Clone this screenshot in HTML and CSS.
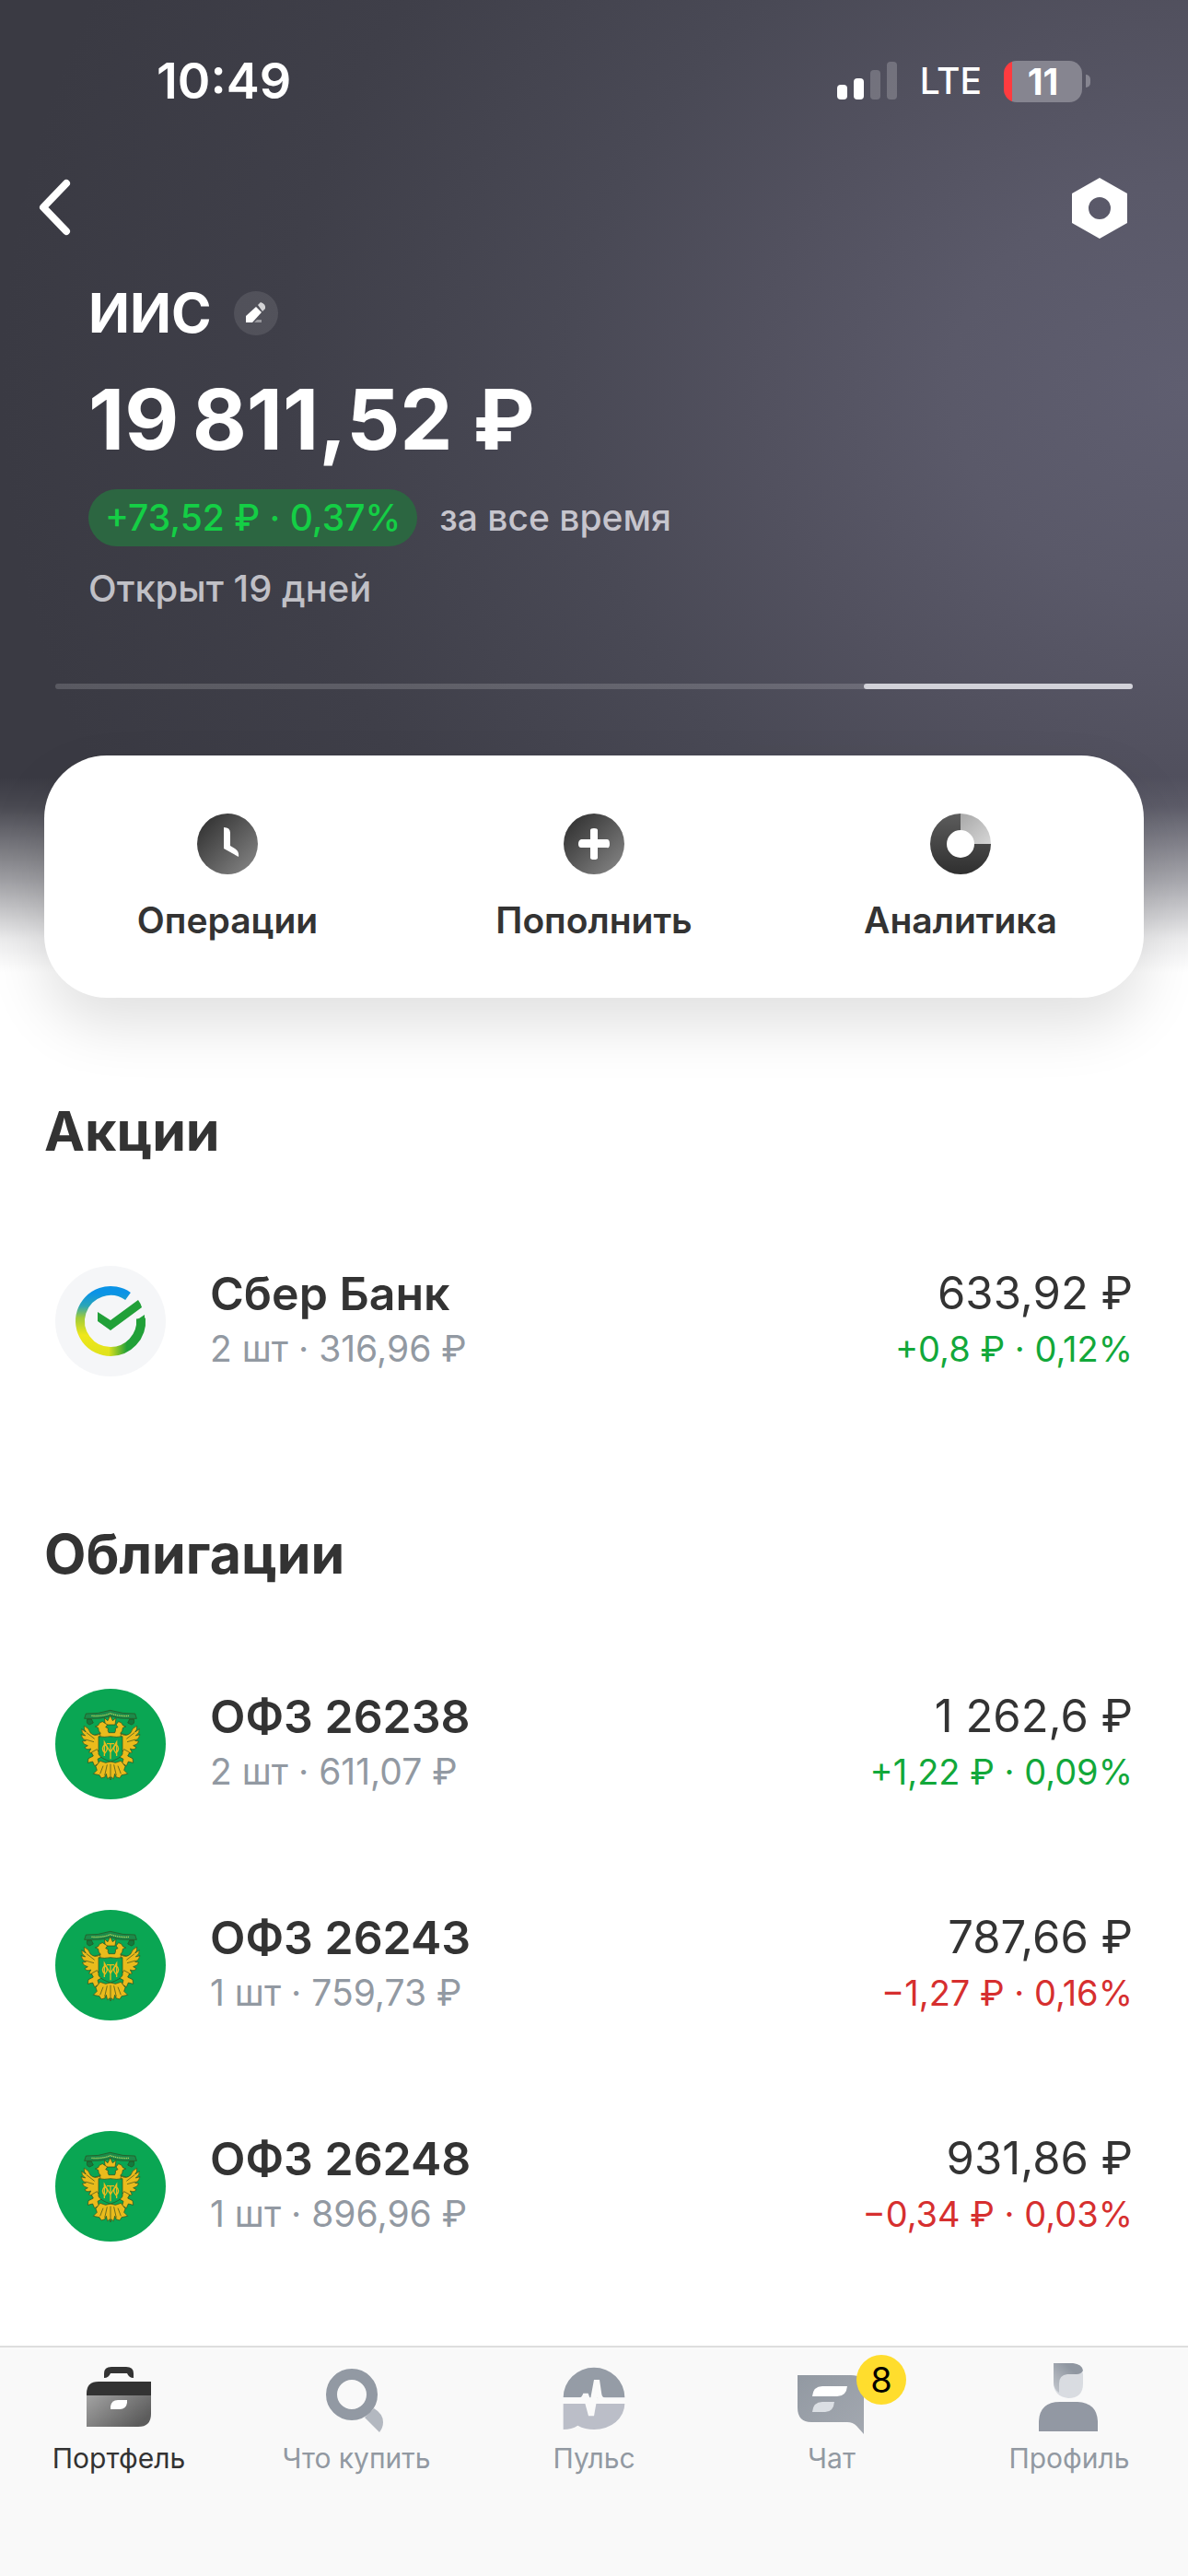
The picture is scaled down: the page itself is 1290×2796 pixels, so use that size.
FILE: index.html
```html
<!DOCTYPE html>
<html lang="ru">
<head>
<meta charset="utf-8">
<meta name="viewport" content="width=device-width, initial-scale=1">
<title>ИИС</title>
<link rel="stylesheet" href="styles.css">
</head>
<body>
<svg class="defs" width="0" height="0" aria-hidden="true">
  <defs>
    <linearGradient id="dark" x1="0" y1="0" x2="1" y2="1"><stop offset="0.1" stop-color="#333"/><stop offset="1" stop-color="#8a8a8a"/></linearGradient>
    <linearGradient id="ring" x1="0" y1="0" x2="0" y2="1"><stop offset="0" stop-color="#5c5c5c"/><stop offset="1" stop-color="#2f2f2f"/></linearGradient>
    <linearGradient id="wedge" x1="0" y1="0" x2="1" y2="1"><stop offset="0" stop-color="#a8a8a8"/><stop offset="1" stop-color="#d6d6d6"/></linearGradient>
    <linearGradient id="case" x1="0" y1="0" x2="1" y2="0.6"><stop offset="0" stop-color="#a3a3a3"/><stop offset="1" stop-color="#5c5c5c"/></linearGradient>
    <linearGradient id="chat" x1="0" y1="0" x2="1" y2="1"><stop offset="0" stop-color="#9299a2"/><stop offset="1" stop-color="#a3a8b0"/></linearGradient>
    <linearGradient id="hair" x1="1" y1="0" x2="0" y2="1"><stop offset="0.3" stop-color="#9097a1"/><stop offset="1" stop-color="#c4c8ce"/></linearGradient>
    <linearGradient id="sberLeft" gradientUnits="userSpaceOnUse" x1="60" y1="22" x2="60" y2="98"><stop offset="0.1" stop-color="#0b93e6"/><stop offset="0.28" stop-color="#2aa5b8"/><stop offset="0.45" stop-color="#9fcb3a"/><stop offset="0.7" stop-color="#efe71b"/><stop offset="1" stop-color="#dfe21c"/></linearGradient>
    <linearGradient id="sberRight" gradientUnits="userSpaceOnUse" x1="58" y1="0" x2="80" y2="0"><stop offset="0" stop-color="#dfe21c"/><stop offset="0.9" stop-color="#21a038"/></linearGradient>
  </defs>
  <symbol id="emblem" viewBox="60 69 360 360">
    <circle cx="240" cy="249" r="180" fill="#0aa653"/>
    <g stroke="#2c4a1c" stroke-width="2" stroke-linejoin="round">
      <path d="M160 150Q200 152 239 139Q282 152 320 150L325 166H308Q270 168 240 158Q208 168 172 166H155Z" fill="#1c8b4a"/>
      <path d="M164 168q-4 16 8 18l12-6-6-12zM316 168q4 16-8 18l-12-6 6-12z" fill="#137a3d"/>
      <g fill="#eabb1c">
        <path d="M223 186l-3-22 11 9 8-17 8 17 11-9-3 22z"/>
        <path d="M214 176q-12 2-14 12l-10 4 10 4q0 12 8 18l-14 4q-8 4-12 2v10h116v-10q-4 2-12-2l-14-4q8-6 8-18l10-4-10-4q-2-10-14-12l-8 10 6 8-8 4q2 8-2 14h-20q-4-6-2-14l-8-4 6-8z"/>
        <path d="M206 216q-18 10-32-4-4-16-20-22-2 12 6 20l-14-10q-2 12 12 22l-14-4q2 14 16 20l-12 2q4 12 18 14l-10 6q6 10 20 4l-6 12q8 6 18-2l-4 16q14-2 20-16l6-14z"/>
        <path d="M274 216q18 10 32-4 4-16 20-22 2 12-6 20l14-10q2 12-12 22l14-4q-2 14-16 20l12 2q-4 12-18 14l10 6q-6 10-20 4l6 12q-8 6-18-2l4 16q-14-2-20-16l-6-14z"/>
        <path d="M196 266l-18 10 6 12-16 8-2 14 16-4 6 14 14-8-4-14 14-8zM284 266l18 10-6 12 16 8 2 14-16-4-6 14-14-8 4-14-14-8z"/>
        <path d="M206 304l-14 18 4 12-12 12 20 4 6 10 12-4 4-10 4 16 8-6 2 10 2-10 8 6 4-16 4 10 12 4 6-10 20-4-12-12 4-12-14-18-18 6-16-4-16 4z"/>
      </g>
    </g>
    <path d="M216 320l-10 26M229 316l-8 36M240 314v42M251 316l8 36M264 320l10 26M162 212l26 20M158 234l28 8M318 212l-26 20M322 234l-28 8" fill="none" stroke="#2c4a1c" stroke-width="2"/>
    <path d="M201 224Q220 228 240 224Q260 228 279 224V282Q272 296 240 306Q208 296 201 282Z" fill="#0aa653" stroke="#2c4a1c" stroke-width="2"/>
    <path d="M220 288V242L240 276L260 242V288M240 246V298M228 248h24M222 250q-16 14 0 28q14-14 0-28M258 250q16 14 0 28q-14-14 0-28" fill="none" stroke="#eabb1c" stroke-width="4"/>
    <path d="M178 157Q210 160 240 149Q270 160 302 157" fill="none" stroke="#a9cf5a" stroke-width="4" stroke-dasharray="4 2"/>
  </symbol>
</svg>

<div class="app">
  <header class="hero">
    <div class="status">
      <span class="status-time">10:49</span>
      <div class="status-side">
        <svg class="signal" viewBox="0 0 66 42" aria-hidden="true"><g fill="#fff"><rect y="25" width="11" height="16" rx="4"/><rect x="18" y="18" width="11" height="23" rx="4"/><g opacity=".2"><rect x="36" y="9" width="11" height="32" rx="4"/><rect x="54" width="11" height="41" rx="4"/></g></g></svg>
        <span class="status-net">LTE</span>
        <span class="battery"><span class="battery-body">11</span><span class="battery-tip"></span></span>
      </div>
    </div>
    <div class="toolbar">
      <button class="icon-button" type="button" aria-label="Назад"><svg class="back" viewBox="0 0 40 66" aria-hidden="true"><path d="M32 6L7 32L32 58" fill="none" stroke="#fff" stroke-width="8" stroke-linecap="round" stroke-linejoin="round"/></svg></button>
      <button class="icon-button" type="button" aria-label="Настройки"><svg class="settings" viewBox="0 0 60 66" aria-hidden="true"><path fill="#fff" fill-rule="evenodd" d="M30 0L60 17V49L30 66L0 49V17ZM30 21a12 12 0 1 0 0 24a12 12 0 1 0 0-24Z"/></svg></button>
    </div>
    <div class="summary">
      <div class="account">
        <h1 class="account-name">ИИС</h1>
        <button class="edit" type="button" aria-label="Переименовать"><svg viewBox="0 0 48 48" aria-hidden="true"><path d="M13 34V27L24 17L30 23L20 34Z" fill="#fff"/><path d="M26 15l3-3q6 2 5 7l-3 3z" fill="#fff" opacity=".75"/><path d="M22 34l3-3h5v3z" fill="#fff" opacity=".4"/></svg></button>
      </div>
      <p class="total">19&#8239;811,52&nbsp;₽</p>
      <p class="profit"><span class="pill">+73,52 ₽ · 0,37%</span><span>за все время</span></p>
      <p class="opened">Открыт 19 дней</p>
    </div>
    <div class="progress"><span class="progress-value"></span></div>
    <div class="actions">
      <button class="action" type="button">
        <svg class="action-icon" viewBox="0 0 66 66" aria-hidden="true"><circle cx="33" cy="33" r="33" fill="url(#dark)"/><path d="M29 15q7 0 7 6V35L41 38Q46 41 45 47L29 38Z" fill="#fff"/></svg>
        Операции
      </button>
      <button class="action" type="button">
        <svg class="action-icon" viewBox="0 0 66 66" aria-hidden="true"><circle cx="33" cy="33" r="33" fill="url(#dark)"/><path d="M29 18q0-2 4-2t4 2V28H47q3 0 3 5t-3 4H37V48q0 2-4 2t-4-2V37H19q-3 0-3-4t3-5H29Z" fill="#fff"/></svg>
        Пополнить
      </button>
      <button class="action" type="button">
        <svg class="action-icon" viewBox="0 0 66 66" aria-hidden="true"><path d="M33 0A33 33 0 1 0 66 33H48A15 15 0 1 1 33 18Z" fill="url(#ring)"/><path d="M33 0A33 33 0 0 1 66 33H48A15 15 0 0 0 33 18Z" fill="url(#wedge)"/></svg>
        Аналитика
      </button>
    </div>
  </header>

  <main class="content">
    <section class="group">
      <h2 class="group-title">Акции</h2>
      <ul class="assets">
        <li class="asset">
          <svg class="logo" viewBox="0 0 120 120" aria-hidden="true"><circle cx="60" cy="60" r="60" fill="#f5f6f8"/><path d="M79 33A33 33 0 1 0 60 93" fill="none" stroke="url(#sberLeft)" stroke-width="10"/><path d="M59 93A33 33 0 0 0 93 57" fill="none" stroke="url(#sberRight)" stroke-width="10"/><path d="M88 60V59L97 53V60Z" fill="#21a038"/><path d="M46 50L60 59L90 37Q93 41 94 45L60 70L46 60Z" fill="#21a038"/></svg>
          <div class="asset-info"><h3 class="asset-name">Сбер Банк</h3><p class="asset-note">2 шт · 316,96 ₽</p></div>
          <div class="asset-sum"><p class="asset-value">633,92 ₽</p><p class="asset-change up">+0,8 ₽ · 0,12%</p></div>
        </li>
      </ul>
    </section>
    <section class="group">
      <h2 class="group-title">Облигации</h2>
      <ul class="assets">
        <li class="asset">
          <svg class="logo" aria-hidden="true"><use href="#emblem"/></svg>
          <div class="asset-info"><h3 class="asset-name">ОФЗ 26238</h3><p class="asset-note">2 шт · 611,07 ₽</p></div>
          <div class="asset-sum"><p class="asset-value">1&nbsp;262,6 ₽</p><p class="asset-change up">+1,22 ₽ · 0,09%</p></div>
        </li>
        <li class="asset">
          <svg class="logo" aria-hidden="true"><use href="#emblem"/></svg>
          <div class="asset-info"><h3 class="asset-name">ОФЗ 26243</h3><p class="asset-note">1 шт · 759,73 ₽</p></div>
          <div class="asset-sum"><p class="asset-value">787,66 ₽</p><p class="asset-change down">−1,27 ₽ · 0,16%</p></div>
        </li>
        <li class="asset">
          <svg class="logo" aria-hidden="true"><use href="#emblem"/></svg>
          <div class="asset-info"><h3 class="asset-name">ОФЗ 26248</h3><p class="asset-note">1 шт · 896,96 ₽</p></div>
          <div class="asset-sum"><p class="asset-value">931,86 ₽</p><p class="asset-change down">−0,34 ₽ · 0,03%</p></div>
        </li>
      </ul>
    </section>
  </main>

  <nav class="tabs">
    <a class="tab tab-active" href="#portfolio">
      <svg class="tab-icon" viewBox="0 0 88 88" aria-hidden="true"><path d="M28 19V14Q28 7 36 7H52Q60 7 60 14V19Q55 19 53 14H35Q33 19 28 19Z" fill="#333"/><path d="M9 38V36Q9 23 22 23H79V38Z" fill="#333"/><path d="M9 38H79V58Q79 72 65 72H9Z" fill="url(#case)"/><path d="M35 53V50Q36 43 43 43H53V46Q52 53 45 53Z" fill="#fff"/></svg>
      Портфель
    </a>
    <a class="tab" href="#buy">
      <svg class="tab-icon" viewBox="0 0 88 88" aria-hidden="true"><path d="M53 62L63 52Q73 58 73 67Q73 73 69 78Z" fill="#b3b8c0"/><circle cx="39" cy="37" r="22" fill="none" stroke="#9299a3" stroke-width="12"/></svg>
      Что купить
    </a>
    <a class="tab" href="#pulse">
      <svg class="tab-icon" viewBox="33 6 264 264" aria-hidden="true"><path d="M65 127A100 98 0 0 1 265 127Z" fill="#959ca6"/><path d="M65 147H265A99 84 0 0 1 165 231Q136 231 112 218Q92 231 65 231Z" fill="#bbbec8"/><path d="M62 127H118Q124 127 127 120L130 113H146L153 133L165 69H183L190 116Q192 128 204 128H268V147H196Q180 147 176 125L165 187H147L136 146H62Z" fill="#fafafa"/></svg>
      Пульс
    </a>
    <a class="tab" href="#chat">
      <span class="tab-picture">
        <svg class="tab-icon" viewBox="0 0 88 88" aria-hidden="true"><path d="M7 16H65Q79 16 79 28V80L71 71Q67 67 61 67H22Q7 67 7 51Z" fill="url(#chat)"/><path d="M23 39Q24 28 34 28H61Q60 39 50 39Z" fill="#fff"/><path d="M23 56Q24 45 34 45H47Q46 56 37 56Z" fill="#dbdfe4"/></svg>
        <span class="badge">8</span>
      </span>
      Чат
    </a>
    <a class="tab" href="#profile">
      <svg class="tab-icon" viewBox="0 0 88 88" aria-hidden="true"><path d="M27 3H48Q58 4 59 15V25Q59 41 43 41Q27 39 27 24Z" fill="#d9dce1"/><path d="M27 3H48Q58 4 59 11Q57 15 52 15H42Q33 16 33 25V35Q27 31 27 24Z" fill="url(#hair)"/><path d="M11 77V66Q12 45 34 45H53Q74 46 75 66V77Z" fill="#9298a3"/></svg>
      Профиль
    </a>
  </nav>
</div>
</body>
</html>
```
FILE: styles.css
```css
* {
  box-sizing: border-box;
}

body,
h1,
h2,
h3,
p,
ul {
  margin: 0;
  padding: 0;
}

body {
  background: #fff;
  color: #333;
  font-family: Inter, "Liberation Sans", sans-serif;
  font-size: 39px;
}

button {
  margin: 0;
  padding: 0;
  border: 0;
  background: none;
  color: inherit;
  font: inherit;
  cursor: pointer;
}

svg {
  display: block;
}

.defs {
  position: absolute;
}

.app {
  display: flex;
  flex-direction: column;
  min-height: 100vh;
}

/* Header */

.hero {
  padding: 0 48px;
  background:
    linear-gradient(to bottom, rgba(255, 255, 255, 0) calc(100% - 240px), rgba(255, 255, 255, 0.08) calc(100% - 208px), rgba(255, 255, 255, 0.5) calc(100% - 130px), rgba(255, 255, 255, 0.9) calc(100% - 64px), #fff calc(100% - 28px)),
    radial-gradient(ellipse 1290px 1100px at 100% 420px, #5f5e70 0%, #5a5969 20%, #52515f 36%, #494955 52%, #3f3f49 76%, #3a3a43 100%);
}

.status {
  display: flex;
  align-items: center;
  justify-content: space-between;
  padding: 54px 107px 56px 122px;
  padding-right: 58px;
  color: #fff;
  line-height: 68px;
}

.status-time {
  font-size: 54px;
  font-weight: 600;
}

.status-side {
  display: flex;
  align-items: center;
  gap: 24px;
}

.signal {
  width: 66px;
  height: 42px;
}

.status-net {
  font-size: 39px;
  font-weight: 500;
}

.battery {
  display: flex;
  align-items: center;
  gap: 4px;
}

.battery-body {
  width: 85px;
  border-radius: 14px;
  background: linear-gradient(to right, #ff3b3f 9px, #868590 9px);
  font-size: 39px;
  font-weight: 700;
  line-height: 45px;
  text-align: center;
}

.battery-tip {
  width: 5px;
  height: 14px;
  border-radius: 0 5px 5px 0;
  background: #868590;
}

.toolbar {
  display: flex;
  align-items: center;
  justify-content: space-between;
  height: 96px;
  margin: 0 18px 30px -8px;
}

.back {
  width: 40px;
  height: 66px;
}

.settings {
  width: 60px;
  height: 66px;
}

.summary {
  padding: 0 48px;
  color: #fff;
}

.account {
  display: flex;
  align-items: center;
  gap: 24px;
}

.account-name {
  font-size: 59px;
  font-weight: 700;
  line-height: 72px;
}

.edit {
  width: 48px;
  height: 48px;
  border-radius: 50%;
  background: rgba(255, 255, 255, 0.1);
}

.total {
  margin: 27px 0 24px;
  font-size: 91px;
  font-weight: 700;
  line-height: 104px;
}

.profit {
  display: flex;
  align-items: center;
  gap: 24px;
  color: #c6c5cd;
  font-weight: 500;
  line-height: 62px;
}

.pill {
  padding: 0 18px;
  border-radius: 31px;
  background: #2c6641;
  color: #14cf45;
}

.opened {
  margin-top: 22px;
  color: #c0c0c6;
  font-size: 40px;
  font-weight: 500;
  line-height: 48px;
}

.progress {
  display: flex;
  justify-content: flex-end;
  margin: 79px 12px 72px;
  border-radius: 3px;
  background: rgba(255, 255, 255, 0.16);
}

.progress-value {
  width: 25%;
  height: 6px;
  border-radius: 3px;
  background: #d2d2d9;
}

.actions {
  display: grid;
  grid-template-columns: repeat(3, 1fr);
  padding: 63px 0 60px;
  border-radius: 68px;
  background: #fff;
  box-shadow: 0 30px 64px rgba(0, 0, 0, 0.12);
}

.action {
  display: flex;
  flex-direction: column;
  align-items: center;
  gap: 26px;
  font-weight: 600;
  line-height: 48px;
}

.action-icon {
  width: 66px;
  height: 66px;
}

/* Holdings */

.content {
  flex: 1;
  padding: 109px 48px 52px;
}

.group + .group {
  margin-top: 97px;
}

.group-title {
  margin-bottom: 50px;
  font-size: 59px;
  font-weight: 700;
  line-height: 72px;
}

.assets {
  list-style: none;
}

.asset {
  display: flex;
  align-items: center;
  gap: 48px;
  height: 240px;
  padding: 0 12px;
  line-height: 60px;
}

.logo {
  flex: none;
  width: 120px;
  height: 120px;
}

.asset-info {
  flex: 1;
}

.asset-name {
  font-size: 50px;
  font-weight: 600;
}

.asset-note {
  color: #9299a2;
}

.asset-sum {
  text-align: right;
}

.asset-value {
  font-size: 49px;
}

.asset-change {
  font-size: 38px;
}

.up {
  color: #12a83a;
}

.down {
  color: #d62f2f;
}

/* Bottom tabs */

.tabs {
  position: sticky;
  bottom: 0;
  display: grid;
  grid-template-columns: repeat(5, 1fr);
  padding: 14px 0 110px;
  border-top: 2px solid #dedede;
  background: #f9f9f9;
}

.tab {
  display: flex;
  flex-direction: column;
  align-items: center;
  color: #9299a2;
  font-size: 30px;
  line-height: 36px;
  text-decoration: none;
}

.tab-active {
  color: #333;
}

.tab-icon {
  width: 88px;
  height: 88px;
}

.tab-picture {
  position: relative;
}

.badge {
  position: absolute;
  top: -6px;
  right: -37px;
  width: 54px;
  border-radius: 50%;
  background: #ffdd2d;
  color: #000;
  font-size: 38px;
  line-height: 54px;
  text-align: center;
}
```
